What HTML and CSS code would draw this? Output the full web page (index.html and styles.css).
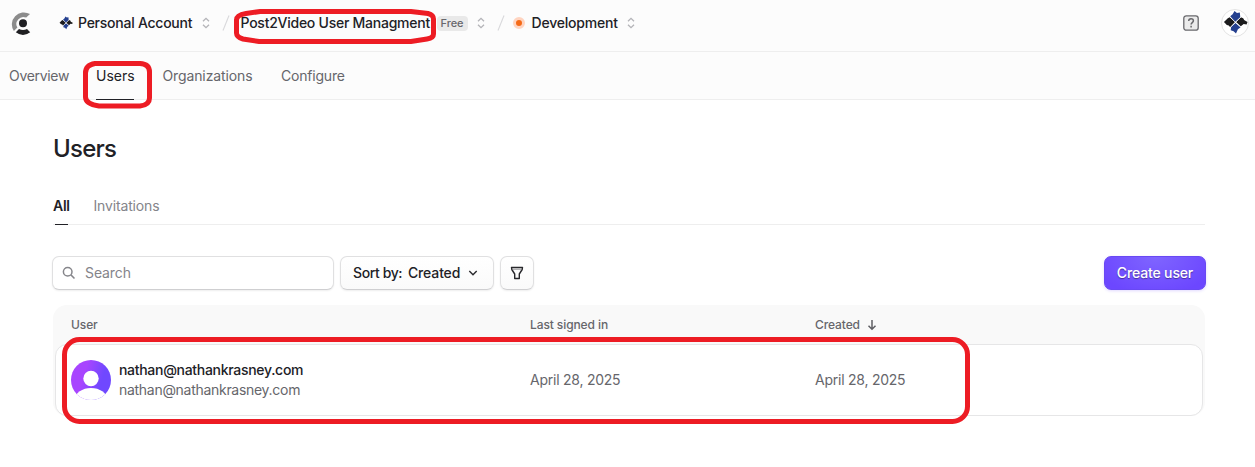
FILE: index.html
```html
<!DOCTYPE html>
<html lang="en">
<head>
<meta charset="utf-8">
<title>Users</title>
<link rel="stylesheet" href="styles.css">
</head>
<body>
<svg class="defs" width="0" height="0">
  <symbol id="updown" viewBox="0 0 8 12"><path d="M1 4.3 4 1.3l3 3M1 7.7l3 3 3-3" fill="none" stroke="#b4b4b8" stroke-width="1.3"/></symbol>
  <symbol id="slash" viewBox="0 0 8 16"><path d="M1 15.5 7 .5" fill="none" stroke="#d9d9dc" stroke-width="1.1"/></symbol>
  <symbol id="emblem" viewBox="0 0 26 26">
    <path d="M7.500 6.500 10 4.500 12 1l2.500 2 3-.5.5 5-5.500 5z" fill="#25408f"/>
    <path d="m1 12.500 4-4 2-1 5.500 5L7.500 18 6 16l-2-.5z" fill="#1b1b1d"/>
    <path d="m13.500 12.500 5-5 2.500 1 1 2 3.500 2-1 2.500-3-.5L18.500 17z" fill="#1b1b1d"/>
    <path d="m13 13.500 5.500 4.500-3 2-2 4.500-2.500-2.500-3-1 .5-3.500z" fill="#25408f"/>
    <path d="m6.800 6.800 12 11.500M19.200 6.800 7.200 18.500" fill="none" stroke="#fff" stroke-width=".8"/>
  </symbol>
</svg>
<header class="topbar">
  <svg class="logo" viewBox="0 0 24 26">
    <path d="M21 4.100A12 12 0 0 0 4.900 21.100L8.400 17.600A7 7 0 0 1 17.200 7.600z" fill="#8c8c8c"/>
    <circle cx="14" cy="13.200" r="4" fill="#1f1f22"/>
    <path d="M6.800 22.200 10 19q4 1.900 8 0l3.200 3.200q-7.200 5.400-14.400 0z" fill="#1f1f22"/>
  </svg>
  <svg class="mini"><use href="#emblem"/></svg>
  <span class="crumb account">Personal Account</span>
  <svg class="updown"><use href="#updown"/></svg>
  <svg class="slash"><use href="#slash"/></svg>
  <span class="crumb project">Post2Video User Managment</span>
  <span class="badge">Free</span>
  <svg class="updown"><use href="#updown"/></svg>
  <svg class="slash second"><use href="#slash"/></svg>
  <span class="dot"></span>
  <span class="crumb env">Development</span>
  <svg class="updown"><use href="#updown"/></svg>
  <svg class="help" viewBox="0 0 16 16"><rect x=".8" y=".8" width="14.400" height="14.400" rx="2.500" fill="#ebebeb" stroke="#68686c" stroke-width="1.300"/><path d="M5.700 6c0-3.100 4.700-3.100 4.700-.2 0 1.900-2.300 1.700-2.300 3.800M8.100 10.800v1.600" fill="none" stroke="#68686c" stroke-width="1.500"/></svg>
  <span class="profile"><svg><use href="#emblem"/></svg></span>
</header>
<nav class="nav">
  <a class="overview">Overview</a>
  <a class="users active">Users</a>
  <a class="orgs">Organizations</a>
  <a class="config">Configure</a>
</nav>
<main class="main">
  <h1>Users</h1>
  <div class="tabs"><a class="all">All</a><a class="inv">Invitations</a></div>
  <div class="tools">
    <div class="field"><svg viewBox="0 0 14 14"><circle cx="5.700" cy="5.700" r="4.300"/><path d="m8.900 8.900 3.600 3.600"/></svg><span>Search</span></div>
    <button class="btn sort"><span class="by">Sort by:</span><span class="val">Created</span><svg viewBox="0 0 10 6"><path d="M1.300 1 5 4.700 8.700 1" fill="none" stroke="#28282c" stroke-width="1.400"/></svg></button>
    <button class="btn filter"><svg viewBox="0 0 14 14"><path d="M1.500 1.500h11l-.3 2L9.300 8v4.500H4.700V8L1.800 3.500z" fill="none" stroke="#28282c" stroke-width="1.400" stroke-linejoin="round"/><path d="M2 3.300h10" stroke="#77777b" stroke-width=".7"/></svg></button>
    <button class="create"><span>Create user</span></button>
  </div>
  <section class="table">
    <div class="row head"><span class="h-user">User</span><span class="h-last">Last signed in</span><span class="h-created">Created <svg viewBox="0 0 10 12"><path d="M5 1v9M1.500 6.700 5 10.200l3.500-3.500" fill="none" stroke="#5f5f64" stroke-width="1.500"/></svg></span></div>
    <div class="row body">
      <div class="person">
        <svg viewBox="0 0 40 40"><defs><linearGradient id="purple" x1="0" y1=".35" x2="1" y2=".65"><stop offset=".3" stop-color="#a845ff"/><stop offset=".75" stop-color="#7048ff"/></linearGradient><clipPath id="round"><circle cx="20" cy="20" r="20"/></clipPath></defs><g clip-path="url(#round)"><path fill="url(#purple)" d="M0 0h40v40H0z"/><circle cx="20" cy="18.500" r="7.700" fill="#fff"/><ellipse cx="20" cy="39.500" rx="16" ry="11.500" fill="#fff"/></g></svg>
        <div class="who"><span class="name">nathan@nathankrasney.com</span><span class="mail">nathan@nathankrasney.com</span></div>
      </div>
      <span class="date">April 28, 2025</span><span class="date">April 28, 2025</span>
    </div>
  </section>
</main>
<svg class="marks" viewBox="0 0 1255 467" fill="none" stroke="#ed1c24" stroke-width="5">
  <path d="M246 13.500 260 11.500H411L428 13.500Q433.500 15 433.500 19V34Q433.500 38 427 39L411 41.500H259L243 39Q236.500 37 236.500 33V20Q236.500 15 246 13.500z"/>
  <path d="M95 63.500H140Q149.500 64 149.500 72V98Q149.500 105 140 106H99Q85.500 104 85.500 97V73Q85.500 65 95 63.500z"/>
  <rect x="64.500" y="339.500" width="903" height="82" rx="15"/>
</svg>
</body>
</html>
```
FILE: styles.css
```css
* { box-sizing: border-box; }
body { margin: 0; width: 1255px; height: 467px; overflow: hidden; position: relative; background: #fff; color: #212126; font: 400 14px/20px Inter, "Liberation Sans", sans-serif; }
svg { display: block; flex: none; }
span, a { white-space: nowrap; }
.defs { position: absolute; }
.topbar { height: 52px; background: #fcfcfc; border-bottom: 1px solid #eee; display: flex; align-items: center; padding: 0 6px 6px 9px; }
.logo { width: 24px; height: 26px; margin-right: 26px; }
.mini { width: 14px; height: 14px; margin-right: 5px; }
.crumb { font-weight: 500; flex: none; }
.account { width: 123.500px; letter-spacing: -.25px; }
.updown { width: 8px; height: 12px; }
.slash { width: 8px; height: 16px; margin: 0 11px 0 12px; }
.project { width: 196px; letter-spacing: -.25px; }
.badge { width: 31px; height: 15px; margin: 1px 9px 0 0; border-radius: 4px; background: #e9e9e9; color: #67676c; font: 500 11px/15px Inter, sans-serif; letter-spacing: -.1px; text-align: center; }
.slash.second { margin-right: 8px; }
.dot { width: 12px; height: 12px; border: 3px solid #ffd4c0; border-radius: 50%; background: #f56a17; margin-right: 7px; }
.env { width: 95.500px; letter-spacing: -.2px; }
.help { width: 16px; height: 16px; margin-left: auto; margin-right: 22px; }
.profile { width: 28px; height: 28px; border: 1px solid #e3e3e3; border-radius: 50%; background: #fff; display: flex; align-items: center; justify-content: center; }
.profile svg { width: 25px; height: 25px; }
.nav { height: 48px; background: #fcfcfc; border-bottom: 1px solid #eee; padding-left: 9px; display: flex; color: #66666b; line-height: 48px; }
.nav a { flex: none; height: 48px; }
.overview { width: 87px; letter-spacing: -.32px; }
.users { width: 38px; margin-right: 28.500px; }
.active { color: #212126; border-bottom: 1px solid #212126; }
.orgs { width: 118.500px; letter-spacing: -.12px; }
.config { letter-spacing: -.2px; }
.main { padding: 35px 49px 0 53px; }
h1 { margin: 0; height: 28px; font-size: 24px; line-height: 28px; font-weight: 500; letter-spacing: -.75px; }
.tabs { height: 42px; margin-top: 20px; width: 1152px; border-bottom: 1px solid #eee; display: flex; line-height: 46px; }
.tabs a { height: 42px; }
.all { width: 40.500px; font-weight: 600; letter-spacing: -.3px; background: linear-gradient(#212126, #212126) 2px 100% / 13px 1px no-repeat; }
.inv { color: #84848a; letter-spacing: -.15px; }
.tools { display: flex; margin: 31px 0 0 -1px; height: 34px; gap: 6px; }
.field, .btn { height: 34px; border: 1px solid #e0e0e1; border-bottom-color: #cfcfd1; border-radius: 7px; background: #fff; box-shadow: 0 1px 2px #00000012; display: flex; align-items: center; padding: 0; font: inherit; color: inherit; }
.field { width: 282px; padding-left: 9px; color: #84848a; gap: 9px; letter-spacing: -.1px; }
.field svg { width: 14px; height: 14px; fill: none; stroke: #86868b; stroke-width: 1.5; }
.btn { background: linear-gradient(#fff, #fafafa); font-weight: 500; }
.sort { width: 154px; padding-left: 12px; letter-spacing: -.15px; }
.by { width: 55px; text-align: left; letter-spacing: -.4px; }
.val { width: 60px; text-align: left; }
.sort svg { width: 10px; height: 6px; }
.filter { width: 34px; justify-content: center; }
.filter svg { width: 14px; height: 14px; }
.create { margin-left: auto; width: 102px; height: 34px; padding: 0; border: 1px solid #6949f3; border-radius: 7px; background: radial-gradient(ellipse at 50% 0, #7f65ff, #6c47ff 85%); color: #fff; font: 500 14px/32px Inter, sans-serif; letter-spacing: -.15px; text-shadow: 0 1px 1px #0006; box-shadow: 0 1px 3px #6c47ff33; }
.table { margin-top: 15px; width: 1152px; height: 111px; padding: 0 2px; border-radius: 14px; background: #f9f9f9; }
.row { display: grid; grid-template-columns: 459px 285px 1fr; align-items: center; padding-left: 16px; }
.head { height: 39px; font-size: 12px; font-weight: 500; color: #66666b; letter-spacing: -.1px; }
.h-created { display: flex; align-items: center; gap: 7px; }
.h-created svg { width: 10px; height: 12px; }
.body { height: 72px; padding-left: 15px; border: 1px solid #e6e6e7; border-radius: 12px; background: #fff; }
.person { display: flex; gap: 8px; }
.person svg { width: 40px; height: 40px; }
.who { display: flex; flex-direction: column; }
.name { font-weight: 500; letter-spacing: -.3px; }
.mail, .date { color: #66666b; }
.mail { letter-spacing: -.29px; }
.date { letter-spacing: -.24px; }
.marks { position: absolute; left: 0; top: 0; width: 1255px; height: 467px; pointer-events: none; }
```
